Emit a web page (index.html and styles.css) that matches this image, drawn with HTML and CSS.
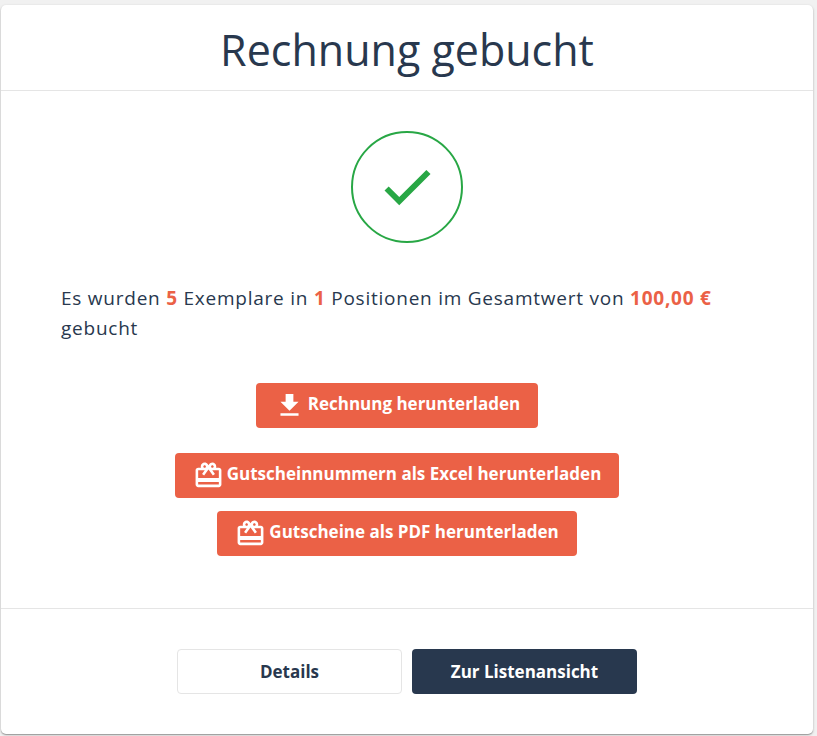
FILE: index.html
```html
<!DOCTYPE html>
<html lang="de">
<head>
<meta charset="utf-8">
<meta name="viewport" content="width=device-width, initial-scale=1">
<title>Rechnung gebucht</title>
<link rel="stylesheet" href="styles.css">
</head>
<body>
<main class="card">
  <header class="card-header">
    <h1>Rechnung gebucht</h1>
  </header>
  <section class="card-body">
    <div class="status">
      <svg viewBox="0 0 24 24" aria-hidden="true"><path d="M9 15.900 4.900 11.800l-1.600 1.600L9 19.100 21.100 7l-1.600-1.600z"/></svg>
    </div>
    <p class="summary">Es wurden <strong>5</strong> Exemplare in <strong>1</strong> Positionen im Gesamtwert von <strong>100,00&nbsp;€</strong> gebucht</p>
    <div class="downloads">
      <button type="button" class="btn btn-primary btn-invoice">
        <svg viewBox="0 0 24 24" aria-hidden="true"><path d="M19 9h-4V3H9v6H5l7 7 7-7zM5 18v2h14v-2H5z"/></svg>
        <span>Rechnung herunterladen</span>
      </button>
      <button type="button" class="btn btn-primary">
        <svg viewBox="0 0 24 24" aria-hidden="true"><path d="M20 6h-2.18c.11-.31.18-.65.18-1 0-1.66-1.34-3-3-3-1.05 0-1.96.54-2.5 1.35l-.5.67-.5-.68C10.96 2.54 10.05 2 9 2 7.34 2 6 3.34 6 5c0 .35.07.69.18 1H4c-1.11 0-1.99.89-1.99 2L2 19c0 1.11.89 2 2 2h16c1.11 0 2-.89 2-2V8c0-1.11-.89-2-2-2zm-5-2c.55 0 1 .45 1 1s-.45 1-1 1-1-.45-1-1 .45-1 1-1zM9 4c.55 0 1 .45 1 1s-.45 1-1 1-1-.45-1-1 .45-1 1-1zm11 15H4v-2h16v2zm0-5H4V8h5.080L7 10.830 8.620 12 11 8.760l1-1.360 1 1.360L15.380 12 17 10.830 14.920 8H20v6z"/></svg>
        <span>Gutscheinnummern als Excel herunterladen</span>
      </button>
      <button type="button" class="btn btn-primary">
        <svg viewBox="0 0 24 24" aria-hidden="true"><path d="M20 6h-2.18c.11-.31.18-.65.18-1 0-1.66-1.34-3-3-3-1.05 0-1.96.54-2.5 1.35l-.5.67-.5-.68C10.96 2.54 10.05 2 9 2 7.34 2 6 3.34 6 5c0 .35.07.69.18 1H4c-1.11 0-1.99.89-1.99 2L2 19c0 1.11.89 2 2 2h16c1.11 0 2-.89 2-2V8c0-1.11-.89-2-2-2zm-5-2c.55 0 1 .45 1 1s-.45 1-1 1-1-.45-1-1 .45-1 1-1zM9 4c.55 0 1 .45 1 1s-.45 1-1 1-1-.45-1-1 .45-1 1-1zm11 15H4v-2h16v2zm0-5H4V8h5.080L7 10.830 8.620 12 11 8.760l1-1.360 1 1.360L15.380 12 17 10.830 14.920 8H20v6z"/></svg>
        <span>Gutscheine als PDF herunterladen</span>
      </button>
    </div>
  </section>
  <footer class="card-footer">
    <button type="button" class="btn btn-outline">Details</button>
    <button type="button" class="btn btn-dark">Zur Listenansicht</button>
  </footer>
</main>
</body>
</html>
```
FILE: styles.css
```css
* {
  box-sizing: border-box;
}

body {
  margin: 0;
  padding: 5px 4px 2px 1px;
  background: #f1f1f1;
  color: #28384e;
  font-family: "Open Sans", sans-serif;
}

.card {
  background: #fff;
  border-radius: 5px;
  box-shadow: 0 1px 3px rgba(0, 0, 0, 0.2), 0 1px 1px rgba(0, 0, 0, 0.25);
}

.card-header {
  padding: 15px 20px 10px;
  border-bottom: 1px solid #e5e5e5;
}

h1 {
  margin: 0;
  font-size: 43px;
  font-weight: 400;
  line-height: 60px;
  text-align: center;
}

.card-body {
  padding: 40px 60px 52px;
}

.status {
  display: flex;
  align-items: center;
  justify-content: center;
  width: 112px;
  height: 112px;
  margin: 0 auto 40px;
  border: 2px solid #28a745;
  border-radius: 50%;
}

.status svg {
  width: 62px;
  height: 62px;
  fill: #28a745;
}

.summary {
  margin: 0 0 40px;
  font-size: 19px;
  line-height: 30px;
  letter-spacing: 0.04em;
}

.summary strong {
  color: #eb6146;
  font-weight: 700;
}

.downloads {
  display: flex;
  flex-direction: column;
  align-items: center;
  gap: 13px;
  padding-right: 20px;
}

.btn {
  display: inline-flex;
  align-items: center;
  justify-content: center;
  height: 45px;
  padding: 0 18px;
  border: 0;
  border-radius: 4px;
  font: 700 17px/22px "Open Sans", sans-serif;
  cursor: pointer;
}

.btn-primary {
  gap: 3px;
  background: #eb6146;
  color: #fff;
}

.btn-primary span {
  padding-bottom: 4px;
}

.btn-primary svg {
  width: 31px;
  height: 31px;
  fill: currentColor;
}

.btn-invoice {
  margin-bottom: 12px;
}

.card-footer {
  display: flex;
  justify-content: center;
  gap: 10px;
  padding: 40px 20px;
  border-top: 1px solid #e5e5e5;
}

.card-footer .btn {
  flex: 0 1 225px;
}

.btn-outline {
  border: 1px solid #e5e5e5;
  background: #fff;
  color: #28384e;
}

.btn-dark {
  background: #28384e;
  color: #fff;
}
```
